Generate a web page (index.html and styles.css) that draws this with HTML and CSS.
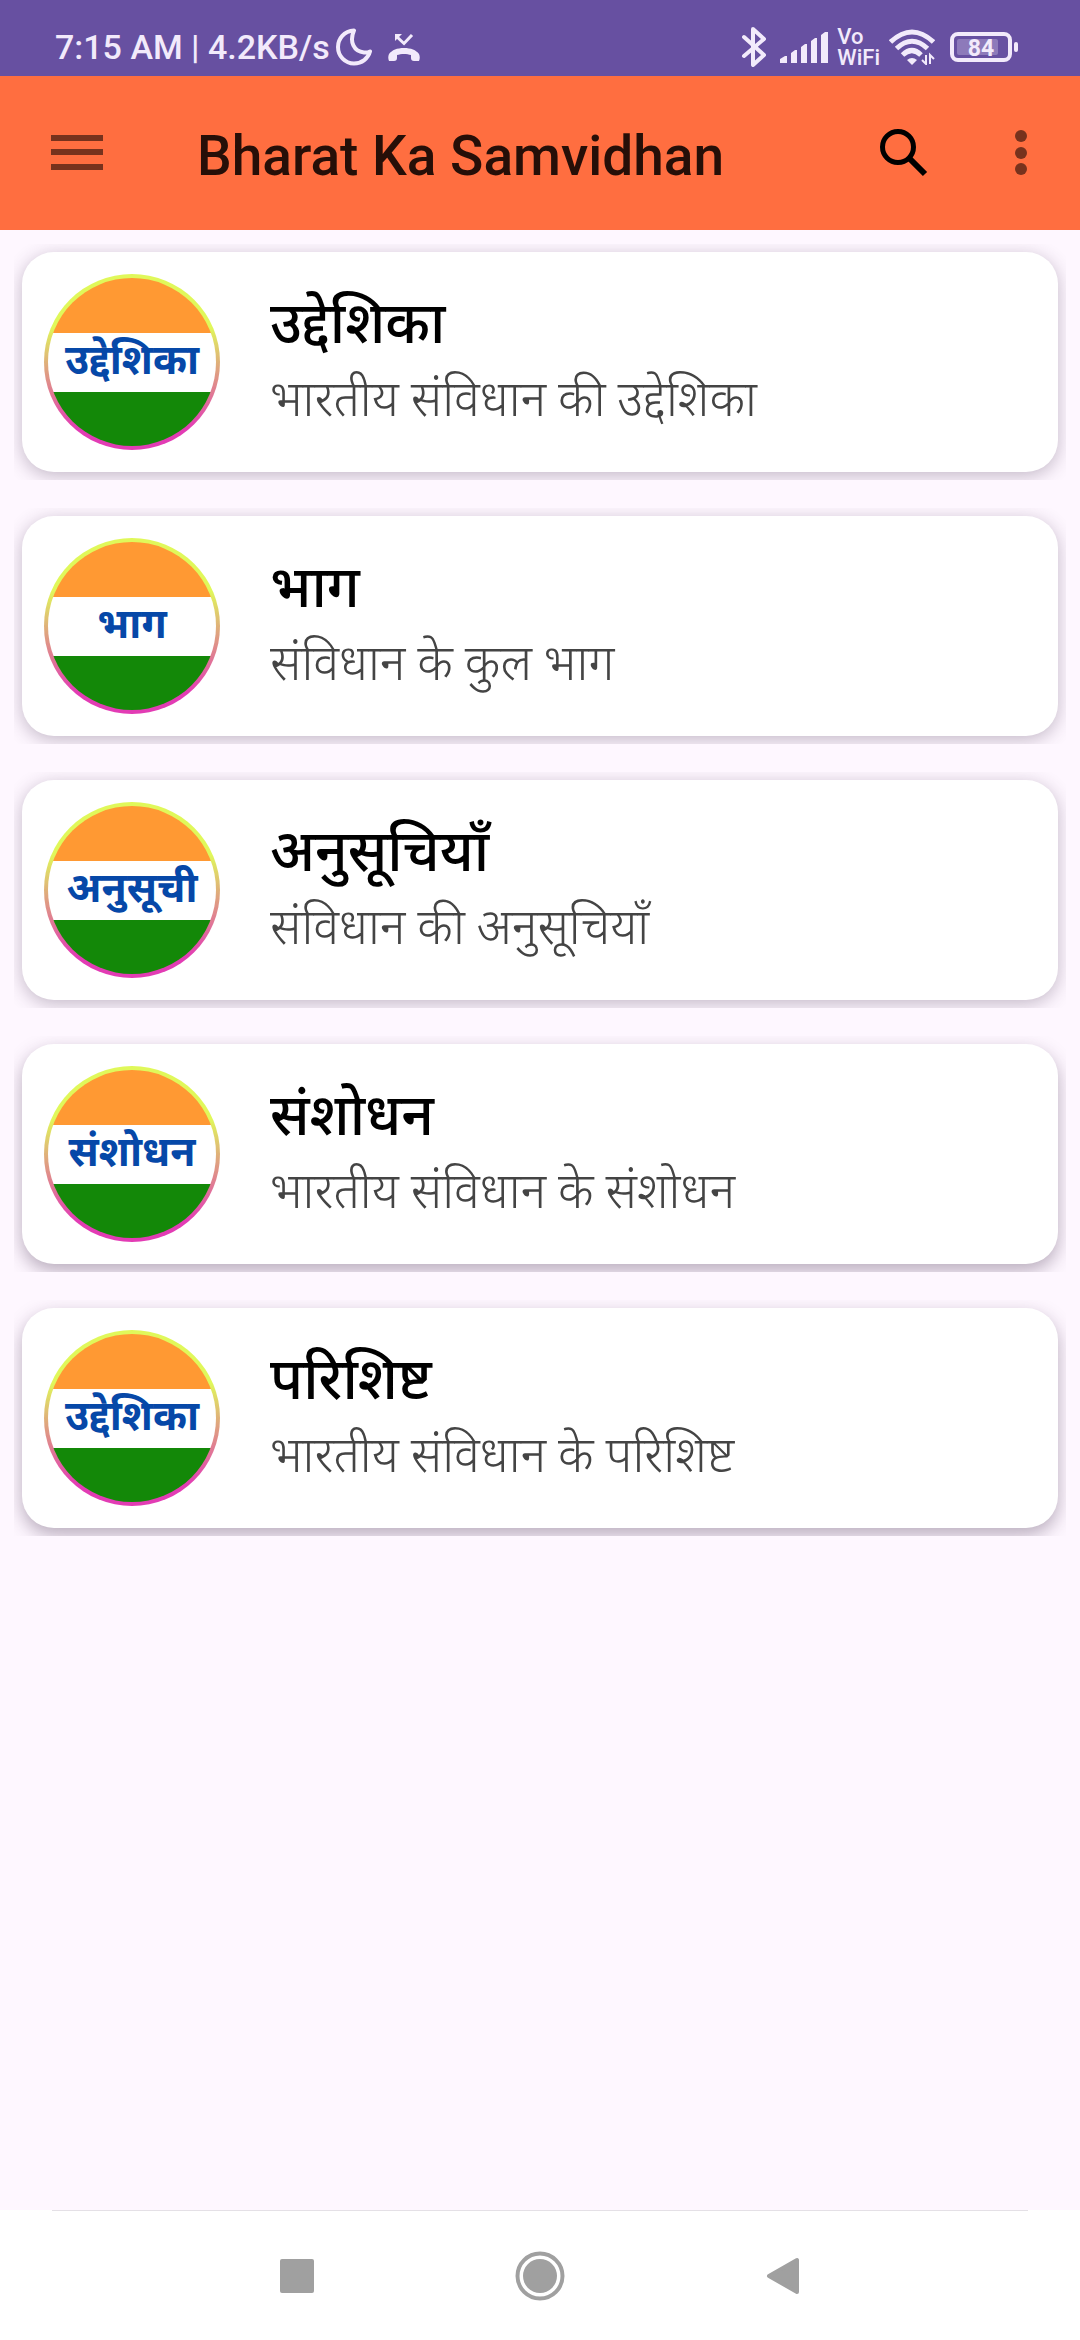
FILE: index.html
```html
<!DOCTYPE html>
<html lang="hi">
<head>
<meta charset="utf-8">
<meta name="viewport" content="width=device-width, initial-scale=1">
<title>Bharat Ka Samvidhan</title>
<link rel="stylesheet" href="styles.css">
</head>
<body>
<div class="status-bar">
  <div class="status-left">
    <span class="status-text">7:15 AM | 4.2KB/s</span>
    <svg class="moon" width="36" height="38" viewBox="0 0 36 38" fill="none" stroke="currentColor" stroke-width="4" stroke-linejoin="round"><path d="M18 2.500C8 3 2 11 2 19c0 9 7 16.500 16 16.500 8 0 14-5 16-12-2 1-4 1.300-6 1C18 23.500 13 14 18 2.500z"/></svg>
    <svg class="missed" width="32" height="27" viewBox="0 0 32 27" fill="none"><path d="M8 2l8 7.500L24 1" stroke="currentColor" stroke-width="3"/><path d="M7 0h7L7 7z" fill="currentColor"/><path d="M1 27h5c2 0 3-1 3-3v-3c4-1.500 10-1.500 14 0v3c0 2 1 3 3 3h5c1-2 1-5 0-7-3-4-8-6-15-6S4 16 1 20c-1 2-1 5 0 7z" fill="currentColor"/></svg>
  </div>
  <div class="status-right">
    <svg class="bluetooth" width="26" height="40" viewBox="0 0 26 40" fill="none" stroke="currentColor" stroke-width="4" stroke-linejoin="round" stroke-linecap="round"><path d="M3 10l20 18-11 10V2l11 10L3 29"/></svg>
    <svg class="signal" width="48" height="32" viewBox="0 0 48 32" fill="currentColor"><path d="M0 32v-4l5-3h2v7zM11 32V22l4-3h2v13zM21 32V16l4-3h2v19zM31 32V10l4-3h2v25zM41 32V4l4-3h3v31z"/></svg>
    <span class="vowifi">Vo<br>WiFi</span>
    <svg class="wifi" width="46" height="36" viewBox="0 0 46 36" fill="none" stroke="currentColor" stroke-width="5"><path d="M1.500 13Q23-7 44.500 13M7.500 19.500Q23 5 38.500 19.500M13.500 26Q23 17 32 26"/><path d="M18 31q5-4 10 0l-5 5z" fill="currentColor" stroke="none"/><path d="M37 26v9l-4-4M41 35v-9l4 4" stroke-width="2"/></svg>
    <svg class="battery" width="68" height="30" viewBox="0 0 68 30"><rect x="2" y="2" width="58" height="26" rx="6" fill="none" stroke="currentColor" stroke-width="4"/><rect x="7" y="7" width="41" height="16" rx="2" fill="currentColor" opacity=".28"/><rect x="64" y="10" width="4" height="10" rx="2" fill="currentColor"/><text x="31" y="24" text-anchor="middle" class="battery-level">84</text></svg>
  </div>
</div>

<header class="app-bar">
  <button class="icon-button menu" type="button" aria-label="Menu"><svg width="52" height="36" viewBox="0 0 52 36" fill="currentColor"><path d="M0 0h52v6H0zM0 14h52v6H0zM0 29h52v6H0z"/></svg></button>
  <h1 class="app-title">Bharat Ka Samvidhan</h1>
  <button class="icon-button search" type="button" aria-label="Search"><svg width="50" height="50" viewBox="0 0 50 50" fill="none" stroke="currentColor"><circle cx="19" cy="19" r="15.500" stroke-width="5"/><path d="M31 31l15 15" stroke-width="6"/></svg></button>
  <button class="icon-button more" type="button" aria-label="More options"><svg width="12" height="46" viewBox="0 0 12 46" fill="currentColor"><circle cx="6" cy="6" r="6"/><circle cx="6" cy="23" r="6"/><circle cx="6" cy="39" r="6"/></svg></button>
</header>

<main class="list">
  <div class="item"><a class="card" href="#preamble"><span class="badge"><span class="flag">उद्देशिका</span></span><span class="text"><span class="title">उद्देशिका</span><span class="subtitle">भारतीय संविधान की उद्देशिका</span></span></a></div>
  <div class="item"><a class="card" href="#parts"><span class="badge"><span class="flag">भाग</span></span><span class="text"><span class="title">भाग</span><span class="subtitle">संविधान के कुल भाग</span></span></a></div>
  <div class="item"><a class="card" href="#schedules"><span class="badge"><span class="flag">अनुसूची</span></span><span class="text"><span class="title">अनुसूचियाँ</span><span class="subtitle">संविधान की अनुसूचियाँ</span></span></a></div>
  <div class="item"><a class="card raised" href="#amendments"><span class="badge"><span class="flag">संशोधन</span></span><span class="text"><span class="title">संशोधन</span><span class="subtitle">भारतीय संविधान के संशोधन</span></span></a></div>
  <div class="item"><a class="card raised" href="#appendix"><span class="badge"><span class="flag">उद्देशिका</span></span><span class="text"><span class="title">परिशिष्ट</span><span class="subtitle">भारतीय संविधान के परिशिष्ट</span></span></a></div>
</main>

<hr class="nav-divider">
<nav class="nav-bar">
  <button class="nav-button" type="button" aria-label="Recent apps"><svg width="34" height="34" viewBox="0 0 34 34" fill="currentColor"><rect width="34" height="34" rx="2"/></svg></button>
  <button class="nav-button" type="button" aria-label="Home"><svg width="50" height="50" viewBox="0 0 50 50"><circle cx="25" cy="25" r="22.500" fill="none" stroke="currentColor" stroke-width="4"/><circle cx="25" cy="25" r="17" fill="currentColor"/></svg></button>
  <button class="nav-button" type="button" aria-label="Back"><svg width="34" height="38" viewBox="0 0 34 38" fill="currentColor" stroke="currentColor" stroke-width="4" stroke-linejoin="round"><path d="M31 3v32L3 19z"/></svg></button>
</nav>
</body>
</html>
```
FILE: styles.css
```css
* {
  box-sizing: border-box;
}

body {
  margin: 0;
  min-height: 100vh;
  display: flex;
  flex-direction: column;
  background: #fef7ff;
  font-family: Roboto, "Noto Sans", sans-serif;
}

button {
  border: 0;
  padding: 0;
  background: none;
  color: inherit;
  display: flex;
  align-items: center;
  justify-content: center;
}

svg {
  display: block;
  flex: none;
}

/* Status bar */
.status-bar {
  height: 76px;
  padding: 18px 62px 0 55px;
  display: flex;
  justify-content: space-between;
  background: #6750a1;
  color: #f2eafb;
}

.status-left,
.status-right {
  height: 58px;
  display: flex;
  align-items: center;
}

.status-text {
  font-size: 34px;
  line-height: 40px;
  font-weight: 500;
}

.moon {
  margin-left: 6px;
}

.missed {
  margin-left: 16px;
}

.signal {
  margin: 0 9px 0 13px;
}

.vowifi {
  font-size: 22px;
  line-height: 21px;
  font-weight: 500;
}

.wifi {
  margin: 0 15px 0 9px;
}

.battery-level {
  font-size: 23px;
  font-weight: 700;
  fill: currentColor;
}

/* App bar */
.app-bar {
  height: 154px;
  padding: 0 42px 0 33px;
  display: flex;
  align-items: center;
  background: #ff6e40;
  color: #77321d;
}

.icon-button {
  height: 88px;
  width: 88px;
}

.app-title {
  flex: 1;
  margin: 0 0 0 76px;
  padding-top: 6px;
  font-size: 55px;
  line-height: 64px;
  font-weight: 500;
  color: #260f08;
}

.search {
  color: #000;
}

.more {
  width: 34px;
  margin-left: 56px;
}

/* Card list */
.list {
  flex: 1;
  padding: 14px;
  display: flex;
  flex-direction: column;
  gap: 28px;
}

.item {
  padding: 8px;
  overflow: hidden;
}

.card {
  padding: 22px;
  display: flex;
  align-items: center;
  gap: 50px;
  border-radius: 32px;
  background: #fff;
  box-shadow: 0 4px 18px rgba(60, 40, 70, 0.3);
  color: #000;
  text-decoration: none;
}

.card.raised {
  box-shadow: 0 7px 18px rgba(60, 40, 70, 0.36);
}

.badge {
  flex: none;
  width: 176px;
  height: 176px;
  padding: 4px;
  display: flex;
  border-radius: 50%;
  background: linear-gradient(#e0f85a 30%, #dfa080 55%, #e23cb4 88%);
}

.flag {
  flex: 1;
  display: flex;
  align-items: center;
  justify-content: center;
  border-radius: 50%;
  background: linear-gradient(#ff9933 55px, #fff 55px, #fff 114px, #138808 114px);
  color: #0648a8;
  font-size: 41px;
  line-height: 60px;
  padding-bottom: 4px;
  font-weight: 700;
  white-space: nowrap;
}

.text {
  display: flex;
  flex-direction: column;
}

.title {
  font-size: 57px;
  line-height: 76px;
  font-weight: 500;
}

.subtitle {
  font-size: 49px;
  line-height: 76px;
  font-weight: 300;
  color: #444;
}

/* System navigation */
.nav-divider {
  width: 100%;
  height: 1px;
  margin: 0;
  border: 0;
  background: linear-gradient(90deg, #fff 52px, #e4e0e6 52px, #e4e0e6 calc(100% - 52px), #fff calc(100% - 52px));
}

.nav-bar {
  height: 129px;
  padding: 0 52px;
  display: flex;
  align-items: center;
  justify-content: center;
  background: #fff;
  color: #a0a0a0;
}

.nav-button {
  width: 243px;
  height: 100px;
}
```
